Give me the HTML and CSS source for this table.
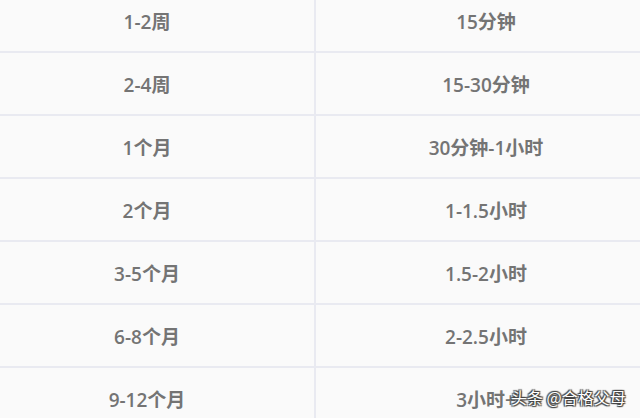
FILE: index.html
```html
<!DOCTYPE html>
<html lang="zh-CN">
<head>
<meta charset="utf-8">
<link rel="stylesheet" href="styles.css">
</head>
<body>
<div class="page">
  <div class="table">
    <div class="row"><div class="cell">1-2周</div><div class="cell">15分钟</div></div>
    <div class="row"><div class="cell">2-4周</div><div class="cell">15-30分钟</div></div>
    <div class="row"><div class="cell">1个月</div><div class="cell">30分钟-1小时</div></div>
    <div class="row"><div class="cell">2个月</div><div class="cell">1-1.5小时</div></div>
    <div class="row"><div class="cell">3-5个月</div><div class="cell">1.5-2小时</div></div>
    <div class="row"><div class="cell">6-8个月</div><div class="cell">2-2.5小时</div></div>
    <div class="row"><div class="cell">9-12个月</div><div class="cell">3小时+</div></div>
  </div>
  <div class="watermark">头条 @合格父母</div>
</div>
</body>
</html>
```
FILE: styles.css
```css
html, body {
  margin: 0;
  padding: 0;
  background: #fafafa;
}
.page {
  position: relative;
  width: 640px;
  height: 418px;
  overflow: hidden;
  background: #fafafa;
}
.table {
  margin-left: -20px;
  margin-top: -10px;
  width: 676px;
  display: flex;
  flex-direction: column;
}
.row {
  display: grid;
  grid-template-columns: 336px 340px;
  height: 61px;
  border-bottom: 2px solid #e9eaf1;
}
.cell {
  display: flex;
  align-items: center;
  justify-content: center;
  font-family: "Open Sans", "Noto Sans CJK SC", sans-serif;
  font-size: 19px;
  font-weight: 600;
  color: #747474;
}
.cell:first-child {
  border-right: 2px solid #e9eaf1;
}
.watermark {
  position: absolute;
  left: 511px;
  top: 386px;
  white-space: nowrap;
  font-family: "Noto Sans CJK SC", sans-serif;
  font-size: 16px;
  line-height: 22px;
  color: #ffffff;
  text-shadow: 0 0 1px #333, 1px 1px 1px #444, -1px -1px 1px #444, 1px -1px 1px #444, -1px 1px 1px #444;
}
```
